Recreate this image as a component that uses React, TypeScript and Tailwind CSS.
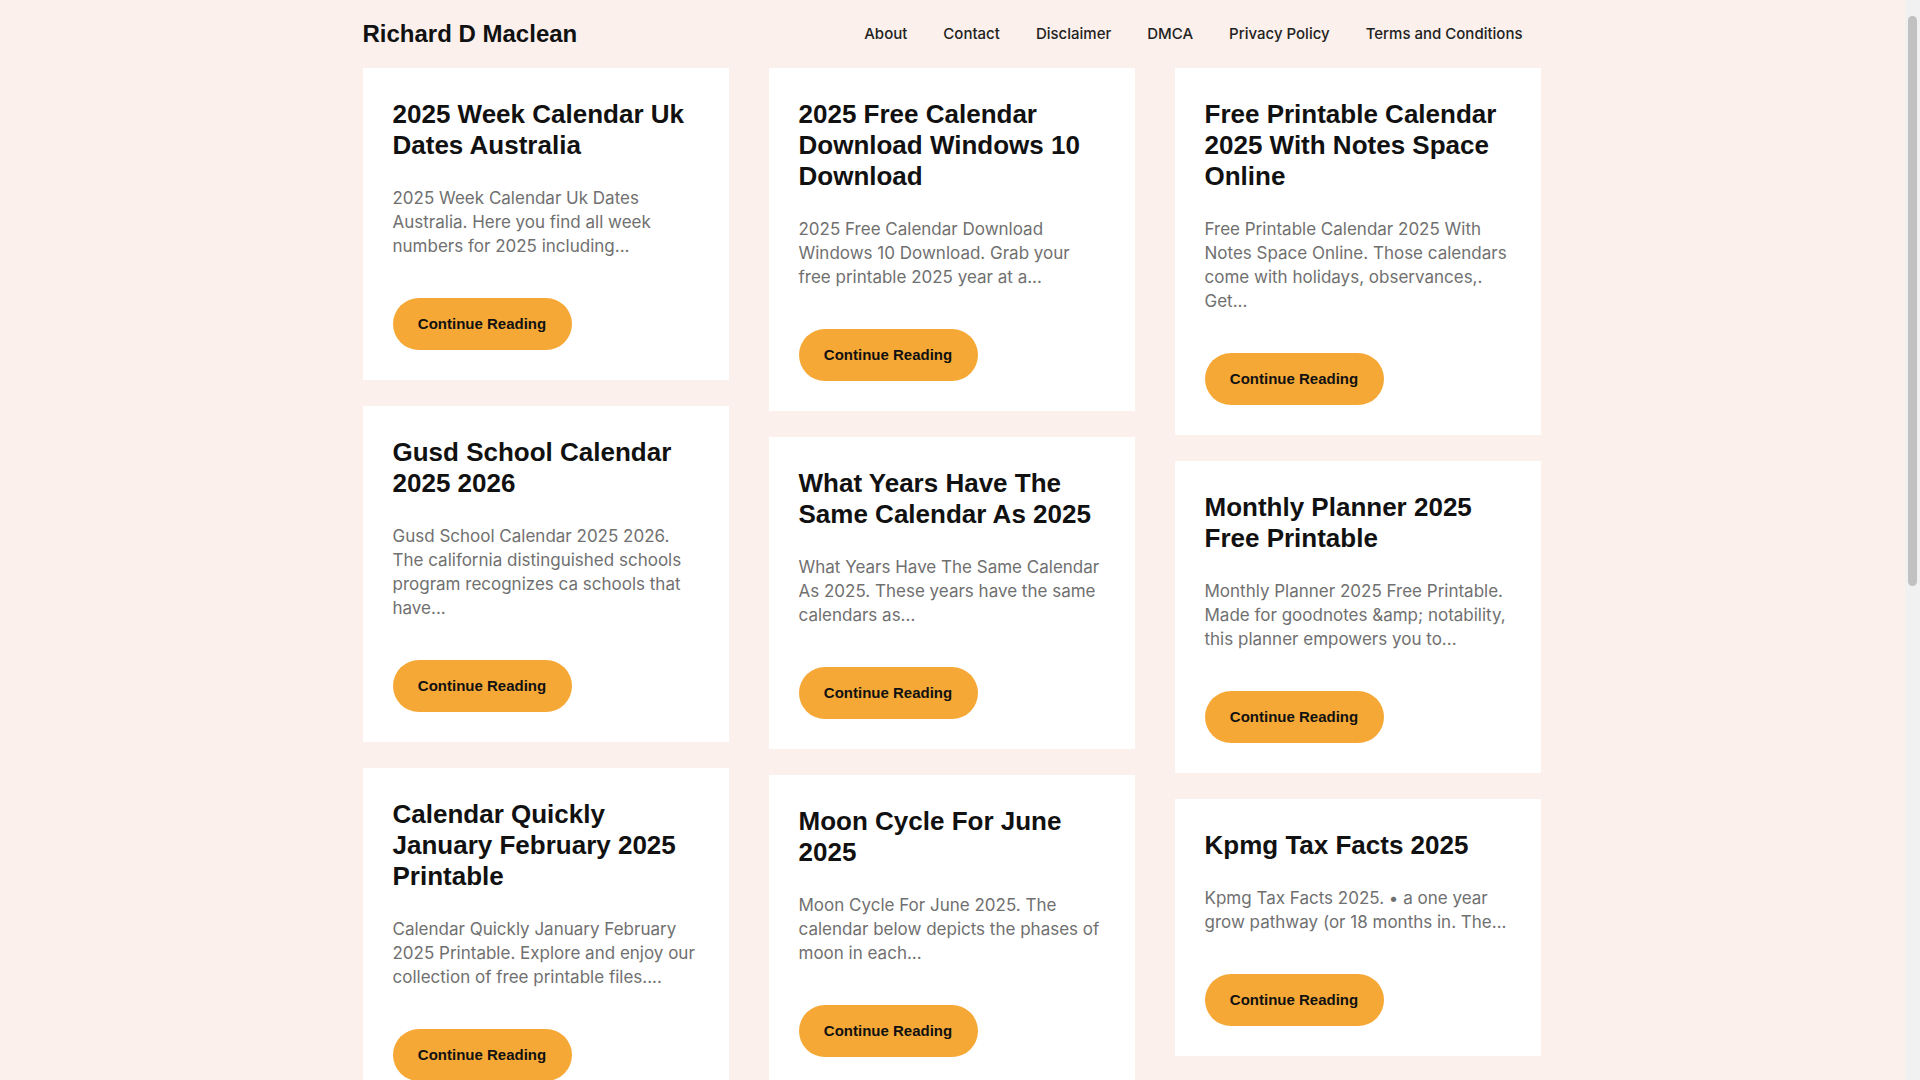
const cols = [
  [
    ["2025 Week Calendar Uk Dates Australia", "2025 Week Calendar Uk Dates Australia. Here you find all week numbers for 2025 including..."],
    ["Gusd School Calendar 2025 2026", "Gusd School Calendar 2025 2026. The california distinguished schools program recognizes ca schools that have..."],
    ["Calendar Quickly January February 2025 Printable", "Calendar Quickly January February 2025 Printable. Explore and enjoy our collection of free printable files...."],
  ],
  [
    ["2025 Free Calendar Download Windows 10 Download", "2025 Free Calendar Download Windows 10 Download. Grab your free printable 2025 year at a..."],
    ["What Years Have The Same Calendar As 2025", "What Years Have The Same Calendar As 2025. These years have the same calendars as..."],
    ["Moon Cycle For June 2025", "Moon Cycle For June 2025. The calendar below depicts the phases of moon in each..."],
  ],
  [
    ["Free Printable Calendar 2025 With Notes Space Online", "Free Printable Calendar 2025 With Notes Space Online. Those calendars come with holidays, observances,. Get..."],
    ["Monthly Planner 2025 Free Printable", "Monthly Planner 2025 Free Printable. Made for goodnotes &amp; notability, this planner empowers you to..."],
    ["Kpmg Tax Facts 2025", "Kpmg Tax Facts 2025. • a one year grow pathway (or 18 months in. The..."],
  ],
];

export default function App() {
  return (
    <div className="flex h-[1080px] overflow-hidden bg-[#fbf0eb]">
      <div className="flex-1">
        <div className="mx-auto w-[1180px]">
          <header className="flex h-[68px] items-center justify-between">
            <div className="text-[24px] font-bold text-[#111]" style={{ fontFamily: '"Liberation Sans", Arial, sans-serif' }}>Richard D Maclean</div>
            <nav className="flex pr-[2px] text-[15px] font-medium text-[#222]" style={{ fontFamily: 'Inter, sans-serif' }}>
              {["About", "Contact", "Disclaimer", "DMCA", "Privacy Policy", "Terms and Conditions"].map((n) => (
                <a key={n} className="px-[18px]">{n}</a>
              ))}
            </nav>
          </header>
          <div className="flex gap-[40px] items-start">
            {cols.map((c, i) => (
              <div key={i} className="flex w-[366px] flex-col gap-[26px]">
                {c.map(([t, e]) => (
                  <article key={t} className="bg-white px-[30px] pt-[31px] pb-[30px]">
                    <h2 className="text-[26px] font-bold leading-[31px] text-[#111]" style={{ fontFamily: '"Liberation Sans", Arial, sans-serif' }}>{t}</h2>
                    <p className="mt-[25px] text-[17px] leading-[24px] text-[#707070]" style={{ fontFamily: 'Inter, sans-serif' }}>{e}</p>
                    <button className="mt-[40px] h-[52px] w-[179px] rounded-full bg-[#f5a836] text-[15px] font-bold text-[#111]" style={{ fontFamily: '"Liberation Sans", Arial, sans-serif' }}>Continue Reading</button>
                  </article>
                ))}
              </div>
            ))}
          </div>
        </div>
      </div>
      <div className="flex w-[15px] flex-col bg-[#f1f1f1] px-[3px] py-[16px]">
        <div className="h-[570px] rounded-full bg-[#c1c1c1]" />
      </div>
    </div>
  );
}
